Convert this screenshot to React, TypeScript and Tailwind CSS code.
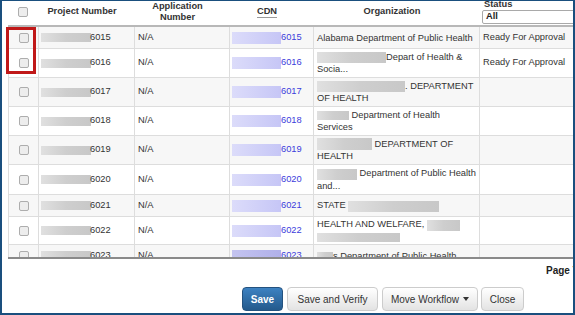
import React from 'react';

const cols = 'grid grid-cols-[30px_96px_95px_84px_166px_130px] w-[601px]';

// grey redaction smudge
const Blur = ({ w, h = 'h-[9px]' }: { w: string; h?: string }) => (
  <span className={`inline-block ${w} ${h} align-middle bg-linear-to-r from-[#e0e0e0] via-[#cecece] to-[#c8c8c8]`} />
);

const CdnBlur = ({ dark = false }: { dark?: boolean }) => (
  <span
    className={`inline-block w-[49px] h-[12px] align-middle bg-linear-to-r ${
      dark ? 'from-[#c4c4f0] to-[#b0b0ea]' : 'from-[#dcdcfa] to-[#c6c6f6]'
    }`}
  />
);

const Box = () => <span className="block w-[10px] h-[10px] rounded-[2px] border border-[#adadad] bg-[#ededed]" />;

type Row = { num: string; h: string; org: React.ReactNode; status?: string };

const rows: Row[] = [
  { num: '6015', h: 'h-[22px]', org: <div>Alabama Department of Public Health</div>, status: 'Ready For Approval' },
  {
    num: '6016',
    h: 'h-[29px]',
    org: (
      <>
        <div><Blur w="w-[69px]" h="h-[11px]" />Depart of Health &amp;</div>
        <div>Socia...</div>
      </>
    ),
    status: 'Ready For Approval',
  },
  {
    num: '6017',
    h: 'h-[29px]',
    org: (
      <>
        <div><Blur w="w-[88px]" h="h-[11px]" />. DEPARTMENT</div>
        <div>OF HEALTH</div>
      </>
    ),
  },
  {
    num: '6018',
    h: 'h-[29px]',
    org: (
      <>
        <div><Blur w="w-[32px]" /> Department of Health</div>
        <div>Services</div>
      </>
    ),
  },
  {
    num: '6019',
    h: 'h-[29px]',
    org: (
      <>
        <div><Blur w="w-[55px]" h="h-[12px]" /> DEPARTMENT OF</div>
        <div>HEALTH</div>
      </>
    ),
  },
  {
    num: '6020',
    h: 'h-[30px]',
    org: (
      <>
        <div><Blur w="w-[40px]" h="h-[11px]" /> Department of Public Health</div>
        <div>and...</div>
      </>
    ),
  },
  { num: '6021', h: 'h-[22px]', org: <div>STATE <Blur w="w-[91px]" h="h-[11px]" /></div> },
  {
    num: '6022',
    h: 'h-[28px]',
    org: (
      <>
        <div>HEALTH AND WELFARE, <Blur w="w-[33px]" h="h-[11px]" /></div>
        <div><Blur w="w-[83px]" /></div>
      </>
    ),
  },
  { num: '6023', h: 'h-[22px]', org: <div><Blur w="w-[16px]" />s Department of Public Health</div> },
];

const cell = 'flex items-center border-l border-[#dddddd] overflow-hidden';
const th = 'flex items-center justify-center text-center pb-[5px] pr-[8px] font-bold';

export default function App() {
  return (
    <div className="relative w-[575px] h-[315px] overflow-hidden bg-white border-x-2 border-t border-b-2 border-[#1a4f7e] pl-[6px] text-[9.3px] text-[#333] font-['Liberation_Sans',Arial,sans-serif]">
      {/* Header */}
      <div className={`${cols} h-[26px] border-b-2 border-[#b8b8b8]`}>
        <div className="flex items-center justify-center pb-[5px]">
          <Box />
        </div>
        <div className={th}>Project Number</div>
        <div className={`${th} leading-[11px]`}>
          Application
          <br />
          Number
        </div>
        <div className={th}>
          <span className="leading-[11px] border-b border-[#9a9a9a]">CDN</span>
        </div>
        <div className={th}>Organization</div>
        <div className="flex flex-col pl-[3px]">
          <span className="font-bold leading-[10px] -mt-[2px] pl-[2px]">Status</span>
          <div className="mt-[1px] h-[14px] border border-[#a9a9a9] rounded-[2px] bg-white flex items-center pl-[3px] font-bold text-[#222]">
            All
          </div>
        </div>
      </div>

      {/* Body */}
      <div className="h-[232px] overflow-hidden border-b-2 border-[#8a8a8a] w-[601px]">
        {rows.map((r, i) => (
          <div
            key={r.num}
            className={`${cols} ${r.h} border-b border-[#dddddd] ${i % 2 === 0 ? 'bg-[#f7f7f7]' : 'bg-white'}`}
          >
            <div className={`${cell} justify-center`}>
              <Box />
            </div>
            <div className={`${cell} pl-[2px] whitespace-nowrap`}>
              <Blur w="w-[50px]" />
              <span className="-ml-[1px]">{r.num}</span>
            </div>
            <div className={`${cell} pl-[3px]`}>N/A</div>
            <div className={`${cell} pl-[2px] whitespace-nowrap`}>
              <CdnBlur dark={i === 8} />
              <span className="text-[#3b3bdc]">{r.num}</span>
            </div>
            <div className={`${cell} pl-[3px] whitespace-nowrap`}>
              <div className="leading-[12px]">{r.org}</div>
            </div>
            <div className={`${cell} pl-[3px] whitespace-nowrap`}>{r.status}</div>
          </div>
        ))}
      </div>

      {/* Footer */}
      <div className="h-[22px] flex items-center pl-[538px] whitespace-nowrap font-bold text-[10px] text-[#222]">
        Page Total
      </div>
      <div className="flex mt-[6px] pl-[234px] text-[10px]">
        <button className="w-[41px] h-[24px] rounded-[4px] border border-[#24527f] bg-linear-to-b from-[#3d82c2] to-[#245a8c] text-white font-bold">
          Save
        </button>
        <button className="ml-[4px] w-[91px] h-[24px] rounded-[4px] border border-[#cccccc] bg-linear-to-b from-white to-[#e3e3e3] text-[#333]">
          Save and Verify
        </button>
        <button className="ml-[4px] w-[96px] h-[24px] rounded-[4px] border border-[#cccccc] bg-linear-to-b from-white to-[#e3e3e3] text-[#333] flex items-center justify-center gap-[4px]">
          Move Workflow
          <span className="inline-block w-0 h-0 border-x-[3px] border-t-[4px] border-x-transparent border-t-[#333]" />
        </button>
        <button className="ml-[3px] w-[43px] h-[24px] rounded-[4px] border border-[#cccccc] bg-linear-to-b from-white to-[#e3e3e3] text-[#333]">
          Close
        </button>
      </div>

      {/* red highlight around first two checkboxes */}
      <div className="absolute left-[4px] top-[26px] w-[30px] h-[47px] border-[3px] border-[#c01818]" />
    </div>
  );
}
